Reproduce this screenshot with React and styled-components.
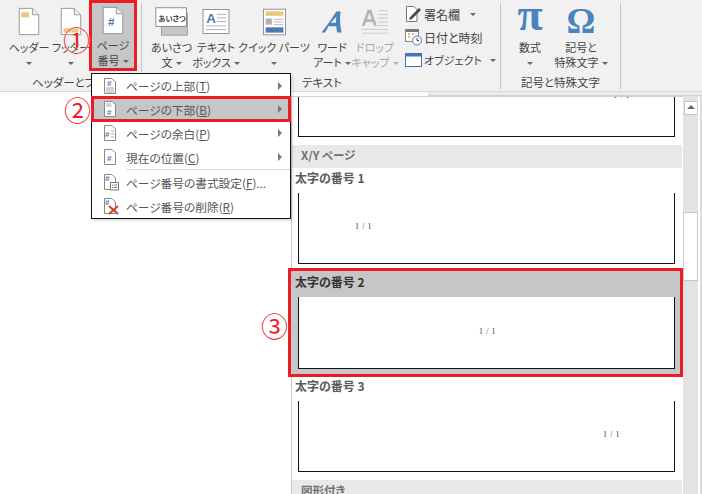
import React from "react";
import styled, { createGlobalStyle } from "styled-components";

const Global = createGlobalStyle`
  html, body { margin: 0; padding: 0; background: #fff; }
  * { box-sizing: border-box; }
  body {
    font-family: "Noto Sans CJK JP", "Noto Sans", sans-serif;
    font-feature-settings: "palt";
    color: #444;
  }
`;

const Page = styled.div`
  position: relative;
  width: 702px;
  height: 494px;
  overflow: hidden;
  background: #fff;
`;

const Ribbon = styled.div`
  display: flex;
  height: 92px;
  background: #f1f1f1;
  border-bottom: 1px solid #d8d8d8;
`;

const Group = styled.div`
  display: flex;
  flex-direction: column;
  width: ${(p) => p.$width}px;
  height: 86px;
  margin-top: 3px;
  border-right: 1px solid #c6c6c6;
`;

const GroupRow = styled.div`
  display: flex;
  height: 75px;
  margin-top: -3px;
  padding-left: ${(p) => p.$pad}px;
`;

const GroupLabel = styled.div`
  height: 14px;
  padding-left: ${(p) => p.$pad || 0}px;
  text-align: ${(p) => (p.$pad ? "left" : "center")};
  font-size: 11.5px;
  line-height: 14px;
  white-space: nowrap;
`;

const RibbonButton = styled.div`
  display: flex;
  flex-direction: column;
  align-items: center;
  width: ${(p) => p.$width}px;
  height: ${(p) => (p.$selected ? 65 : 71)}px;
  margin-top: ${(p) => (p.$selected ? 3 : 0)}px;
  padding-top: ${(p) => (p.$selected ? 2 : 5)}px;
  font-size: 11px;
  line-height: 15px;
  white-space: nowrap;
  color: ${(p) => (p.$disabled ? "#a8a8a8" : "#444")};
  background: ${(p) => (p.$selected ? "#c6c6c6" : "transparent")};
  outline: ${(p) => (p.$selected ? "3px solid #ed1c24" : "none")};
`;

const IconBox = styled.div`
  display: flex;
  align-items: center;
  justify-content: center;
  height: 33px;
  margin-bottom: 2px;
`;

const Caret = styled.span`
  display: inline-block;
  width: 0;
  height: 0;
  margin-left: ${(p) => p.$gap ?? 3}px;
  vertical-align: 2px;
  border-left: 3px solid transparent;
  border-right: 3px solid transparent;
  border-top: 3px solid ${(p) => (p.$disabled ? "#b4b4b4" : "#666")};
`;

const CaretLine = styled.div`
  height: 15px;
`;

const SmallColumn = styled.div`
  display: flex;
  flex-direction: column;
  gap: 1px;
  margin-left: 10px;
  padding-top: 3px;
`;

const SmallRow = styled.div`
  display: flex;
  align-items: center;
  gap: 2px;
  height: 22px;
  font-size: ${(p) => p.$size || 12}px;
  white-space: nowrap;
`;

const BodyStrip = styled.div`
  height: 4px;
  margin-left: 428px;
  background: #ebebeb;
  border-bottom: 1px solid #d0d0d0;
`;

const Body = styled.div`
  display: flex;
  height: 398px;
  padding-left: 291px;
  overflow: hidden;
`;

const Gallery = styled.div`
  width: 392px;
  border-left: 1px solid #c6c6c6;
  border-top: 1px solid #d0d0d0;
`;

const Preview = styled.div`
  display: flex;
  align-items: ${(p) => (p.$clipped ? "flex-start" : "center")};
  height: ${(p) => p.$height}px;
  margin: ${(p) => (p.$selected ? "0 5px 0 7px" : "0 8px 0 6px")};
  padding-left: ${(p) => p.$left || 0}px;
  padding-bottom: ${(p) => (p.$clipped ? 0 : 2)}px;
  overflow: hidden;
  background: #fff;
  border: solid #111;
  border-width: 0 1.5px 1.5px 1.5px;
`;

const PageNumber = styled.span`
  margin-top: ${(p) => (p.$clipped ? -6 : 0)}px;
  font-family: "Liberation Serif", serif;
  font-size: 8px;
  line-height: 10px;
  color: #444;
  letter-spacing: 0.6px;
  white-space: pre;
  opacity: 0.99;
`;

const SectionHeader = styled.div`
  height: 23px;
  margin: ${(p) => p.$before || 0}px 1px 0 0;
  padding-left: 9px;
  background: #e9e9e9;
  font-size: 11.5px;
  font-weight: 700;
  line-height: 21px;
  color: #707070;
`;

const Item = styled.div`
  margin: ${(p) => (p.$selected ? "0 3px 2px -1px" : "0")};
  padding-bottom: ${(p) => p.$bottom}px;
  background: ${(p) => (p.$selected ? "#c6c6c6" : "transparent")};
  outline: ${(p) => (p.$selected ? "3px solid #ed1c24" : "none")};
`;

const ItemTitle = styled.div`
  height: ${(p) => (p.$selected ? 26 : 25)}px;
  padding-left: ${(p) => (p.$selected ? 4 : 3)}px;
  font-size: 12px;
  font-weight: 700;
  line-height: ${(p) => (p.$selected ? 22 : 20)}px;
  color: ${(p) => (p.$selected ? "#333" : "#5a5a5a")};
`;

const Scrollbar = styled.div`
  position: relative;
  width: 15px;
  background: #e3e3e3;
`;

const EdgeLine = styled.div`
  width: 2px;
  margin-left: 2px;
  background: #dcdcdc;
`;

const ScrollUp = styled.div`
  position: absolute;
  top: 5px;
  left: 1px;
  width: 14px;
  height: 14px;
  background: #fff;
  border: 1px solid #c6c6c6;
  &::after {
    content: "";
    position: absolute;
    top: 3px;
    left: 2px;
    border-left: 4px solid transparent;
    border-right: 4px solid transparent;
    border-bottom: 4px solid #666;
  }
`;

const ScrollThumb = styled.div`
  position: absolute;
  top: 116px;
  left: 0;
  width: 15px;
  height: 69px;
  background: #fff;
  border: 1px solid #c6c6c6;
`;

const Menu = styled.div`
  position: absolute;
  left: 91px;
  top: 73px;
  width: 200px;
  height: 146px;
  background: #fff;
  border: 1px solid #111;
  box-shadow: 2px 2px 2px rgba(0, 0, 0, 0.12);
`;

const MenuRow = styled.div`
  display: flex;
  align-items: center;
  height: 24px;
  padding-left: 9px;
  padding-right: 8px;
  font-size: 11.7px;
  color: #555;
  white-space: nowrap;
  background: ${(p) => (p.$selected ? "#c6c6c6" : "transparent")};
  outline: ${(p) => (p.$selected ? "3px solid #ed1c24" : "none")};
  outline-offset: -2px;
  &:first-child {
    height: 23px;
  }
`;

const MenuLabel = styled.span`
  flex: 1;
  margin-left: 7px;
`;

const MenuArrow = styled.span`
  width: 0;
  height: 0;
  border-top: 4px solid transparent;
  border-bottom: 4px solid transparent;
  border-left: 4px solid #777;
`;

const MenuSeparator = styled.div`
  height: 1px;
  margin-left: 34px;
  background: #dadada;
`;

const Callout = styled.span`
  position: absolute;
  left: ${(p) => p.$x}px;
  top: ${(p) => p.$y}px;
  font-size: 27px;
  line-height: 27px;
  color: #ed1c24;
  text-shadow: 0 0 1px #fff, 0 0 2px #fff;
`;

const GlyphIcon = styled.span`
  margin-top: ${(p) => p.$shift || 0}px;
  font-family: "Liberation Serif", serif;
  font-size: ${(p) => p.$size}px;
  font-weight: 700;
  line-height: 33px;
  color: #4a84bc;
`;

const docIcon = (children) => (
  <svg width="22" height="29" viewBox="0 0 26 34">
    <path d="M1.5 1.5H17L24.5 9V32.5H1.5Z" fill="#fff" stroke="#8a8a8a" />
    <path d="M17 1.5V9H24.5" fill="#f1f1f1" stroke="#8a8a8a" />
    {children}
  </svg>
);

const HeaderIcon = () => docIcon(<rect x="4" y="6" width="9" height="6" fill="#e8c77f" />);
const FooterIcon = () => docIcon(<rect x="4" y="25" width="18" height="5" fill="#e8c77f" />);
const PageNumIcon = () =>
  docIcon(
    <text x="7" y="24" fontSize="14" fontWeight="700" fill="#4a7bb0" fontFamily="Liberation Sans">
      #
    </text>
  );

const GreetingIcon = () => (
  <svg width="34" height="29" viewBox="0 0 42 36">
    <rect x="8" y="8" width="32" height="27" fill="#c6c6c6" stroke="#909090" />
    <rect x="1" y="1" width="38" height="23" fill="#fff" stroke="#777" />
    <text x="4" y="17" fontSize="9" fontWeight="700" fill="#444">あいさつ</text>
  </svg>
);

const TextBoxIcon = () => (
  <svg width="28" height="25" viewBox="0 0 30 28">
    <rect x="0.5" y="0.5" width="29" height="27" fill="#fff" stroke="#8a8a8a" />
    <text x="4" y="16" fontSize="15" fontWeight="700" fill="#4a7bb0" fontFamily="Liberation Sans">
      A
    </text>
    <path d="M16 6H26M16 10H26M16 14H26M4 19H26M4 23H26" stroke="#a8a8a8" />
  </svg>
);

const QuickPartsIcon = () => (
  <svg width="23" height="28" viewBox="0 0 26 30">
    <rect x="0.5" y="0.5" width="25" height="29" fill="#fff" stroke="#8a8a8a" />
    <rect x="3" y="3" width="20" height="5" fill="#e8c77f" />
    <rect x="3" y="11" width="7" height="7" fill="#b0b0b0" />
    <path d="M12 12H23M12 15H23M12 18H23" stroke="#b0b0b0" />
    <rect x="3" y="21" width="20" height="6" fill="#4a7bb0" />
  </svg>
);

const WordArtIcon = () => (
  <svg width="26" height="28" viewBox="0 0 30 30">
    <path d="M3 27Q12 16 20 3H25Q23 14 26 27H21Q20 23 20 20H11L7 27ZM13.500 16H19.500L20 9Z" fill="#4a84bc" fillRule="evenodd" />
  </svg>
);

const DropCapIcon = () => (
  <svg width="30" height="28" viewBox="0 0 30 30">
    <path d="M1 19L7 2H11L17 19H14L12.500 15H5.500L4 19ZM6.500 12H11.500L9 5Z" fill="#b4b4b4" fillRule="evenodd" />
    <path d="M18 3H29M18 7H29M18 11H29M18 15H29M18 19H29M1 23H29M1 27H29" stroke="#c8c8c8" />
  </svg>
);

const SignIcon = () => (
  <svg width="17" height="18" viewBox="0 0 17 18">
    <path d="M1.500 1.500H9L12 4.500V16.500H1.500Z" fill="#fff" stroke="#777" />
    <path d="M5 12L14 3L16 5L7 14L4 15Z" fill="#4a4a4a" />
  </svg>
);

const DateIcon = () => (
  <svg width="17" height="18" viewBox="0 0 17 18">
    <rect x="0.5" y="1.500" width="13" height="12" fill="#fff" stroke="#888" />
    <rect x="1" y="1" width="13" height="3" fill="#777" />
    <path d="M3 6H5M7 6H9M3 9H5" stroke="#d8a24a" strokeWidth="1.500" />
    <circle cx="12" cy="12.500" r="4.500" fill="#fff" stroke="#4a7bb0" />
    <path d="M12 10V12.500H14" stroke="#444" fill="none" />
  </svg>
);

const ObjectIcon = () => (
  <svg width="17" height="16" viewBox="0 0 17 16">
    <rect x="0.500" y="1.500" width="16" height="13" fill="#fff" stroke="#3f78b0" />
    <rect x="0.500" y="1.500" width="16" height="3" fill="#3f78b0" />
  </svg>
);

const MenuDoc = ({ lines, hashAt = [4, 12], badge }) => (
  <svg width="18" height="18" viewBox="0 0 18 18">
    <path d="M3.500 1.500H11L14.500 5V16.500H3.500Z" fill="#fff" stroke="#888" />
    {lines && <path d={lines} stroke="#a8a8a8" />}
    <text
      x={hashAt[0]}
      y={hashAt[1]}
      fontSize="8"
      fontWeight="700"
      fill="#4a7bb0"
      fontFamily="Liberation Sans"
    >
      #
    </text>
    {badge}
  </svg>
);

const menuItems = [
  { label: "ページの上部", key: "T", arrow: true, icon: <MenuDoc lines="M5 11H13M5 13H13M5 15H13" hashAt={[6, 9]} /> },
  { label: "ページの下部", key: "B", arrow: true, selected: true, icon: <MenuDoc lines="M5 4H10M5 6H11" hashAt={[6, 15]} /> },
  { label: "ページの余白", key: "P", arrow: true, icon: <MenuDoc lines="M10 7H13M10 10H13M10 13H13" hashAt={[4, 13]} /> },
  { label: "現在の位置", key: "C", arrow: true, icon: <MenuDoc hashAt={[6, 13]} /> },
  { label: "ページ番号の書式設定", key: "F", dots: "...", separated: true, icon: (
    <MenuDoc
      hashAt={[4, 8]}
      badge={<path d="M9.500 9.500H17.500V17H9.500ZM11 12H12M13 12H16M11 14.500H12M13 14.500H16" fill="#fff" stroke="#777" />}
    />
  ) },
  { label: "ページ番号の削除", key: "R", icon: (
    <MenuDoc hashAt={[4, 8]} badge={<path d="M8 9L17 17M17 9L8 17" stroke="#d2492a" strokeWidth="2.200" />} />
  ) },
];

const GalleryItem = ({ title, left, selected, height = 71, bottom = 7 }) => (
  <Item $selected={selected} $bottom={bottom}>
    <ItemTitle $selected={selected}>{title}</ItemTitle>
    <Preview $height={height} $left={left} $selected={selected}>
      <PageNumber>1 / 1</PageNumber>
    </Preview>
  </Item>
);

export default function App() {
  return (
    <Page>
      <Global />
      <Ribbon>
        <Group $width={142}>
          <GroupRow $pad={8}>
            <RibbonButton $width={42}>
              <IconBox><HeaderIcon /></IconBox>
              ヘッダー
              <CaretLine><Caret $gap={0} /></CaretLine>
            </RibbonButton>
            <RibbonButton $width={42}>
              <IconBox><FooterIcon /></IconBox>
              フッター
              <CaretLine><Caret $gap={0} /></CaretLine>
            </RibbonButton>
            <RibbonButton $width={42} $selected>
              <IconBox><PageNumIcon /></IconBox>
              ページ
              <CaretLine>番号<Caret /></CaretLine>
            </RibbonButton>
          </GroupRow>
          <GroupLabel $pad={32}>ヘッダーとフッター</GroupLabel>
        </Group>
        <Group $width={359}>
          <GroupRow $pad={8}>
            <RibbonButton $width={43}>
              <IconBox><GreetingIcon /></IconBox>
              あいさつ
              <CaretLine>文<Caret /></CaretLine>
            </RibbonButton>
            <RibbonButton $width={46}>
              <IconBox><TextBoxIcon /></IconBox>
              テキスト
              <CaretLine>ボックス<Caret /></CaretLine>
            </RibbonButton>
            <RibbonButton $width={70}>
              <IconBox><QuickPartsIcon /></IconBox>
              クイック パーツ
              <CaretLine><Caret $gap={0} /></CaretLine>
            </RibbonButton>
            <RibbonButton $width={46}>
              <IconBox><WordArtIcon /></IconBox>
              ワード
              <CaretLine>アート<Caret /></CaretLine>
            </RibbonButton>
            <RibbonButton $width={40} $disabled>
              <IconBox><DropCapIcon /></IconBox>
              ドロップ
              <CaretLine>キャップ<Caret $disabled /></CaretLine>
            </RibbonButton>
            <SmallColumn>
              <SmallRow><SignIcon />署名欄<Caret $gap={8} /></SmallRow>
              <SmallRow><DateIcon />日付と時刻</SmallRow>
              <SmallRow $size={11}><ObjectIcon />オブジェクト<Caret $gap={6} /></SmallRow>
            </SmallColumn>
          </GroupRow>
          <GroupLabel $pad={160}>テキスト</GroupLabel>
        </Group>
        <Group $width={120}>
          <GroupRow $pad={9}>
            <RibbonButton $width={40}>
              <IconBox><GlyphIcon $size={46} $shift={-14}>π</GlyphIcon></IconBox>
              数式
              <CaretLine><Caret $gap={0} /></CaretLine>
            </RibbonButton>
            <RibbonButton $width={62}>
              <IconBox><GlyphIcon $size={36}>Ω</GlyphIcon></IconBox>
              記号と
              <CaretLine>特殊文字<Caret /></CaretLine>
            </RibbonButton>
          </GroupRow>
          <GroupLabel>記号と特殊文字</GroupLabel>
        </Group>
      </Ribbon>
      <BodyStrip />
      <Body>
        <Gallery>
          <Preview $height={40} $left={314} $clipped>
            <PageNumber $clipped>1 / 1</PageNumber>
          </Preview>
          <SectionHeader $before={8}>X/Y ページ</SectionHeader>
          <GalleryItem title="太字の番号 1" left={56} />
          <GalleryItem title="太字の番号 2" left={180} height={72} bottom={5} selected />
          <GalleryItem title="太字の番号 3" left={304} bottom={8} />
          <SectionHeader>図形付き</SectionHeader>
        </Gallery>
        <Scrollbar>
          <ScrollUp />
          <ScrollThumb />
        </Scrollbar>
        <EdgeLine />
      </Body>
      <Menu>
        {menuItems.map((item) => (
          <React.Fragment key={item.key}>
            {item.separated && <MenuSeparator />}
            <MenuRow $selected={item.selected}>
              {item.icon}
              <MenuLabel>
                {item.label}(<u>{item.key}</u>){item.dots}
              </MenuLabel>
              {item.arrow && <MenuArrow />}
            </MenuRow>
          </React.Fragment>
        ))}
      </Menu>
      <Callout $x={63} $y={26}>①</Callout>
      <Callout $x={64} $y={96}>②</Callout>
      <Callout $x={261} $y={312}>③</Callout>
    </Page>
  );
}
